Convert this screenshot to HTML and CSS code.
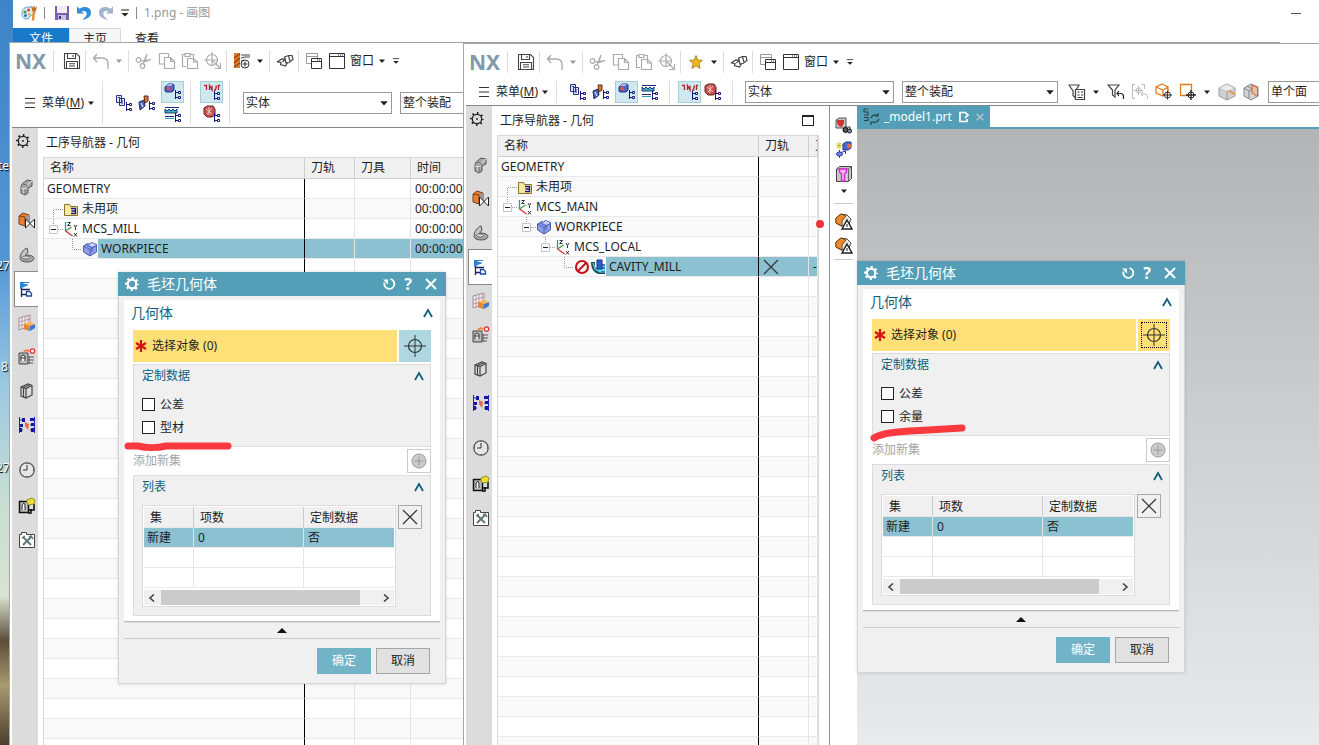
FILE: index.html
```html
<!DOCTYPE html>
<html lang="zh-CN">
<head>
<meta charset="utf-8">
<title>1.png - 画图</title>
<link rel="stylesheet" href="styles.css">
</head>
<body>
<svg class="defs" aria-hidden="true">
  <symbol id="i-palette" viewBox="0 0 18 18"><path d="M2 9c0-4 3-6 7-6s6 2 6 5-2 3-4 3-1 4-4 4-5-2-5-6z" fill="#dcebf5" stroke="#5f9cc4"/><circle cx="5" cy="8" r="1.5" fill="#3c9e4a"/><circle cx="8.500" cy="6" r="1.500" fill="#d8432e"/><circle cx="5.500" cy="11.500" r="1.500" fill="#2f6fc0"/><circle cx="9" cy="10" r="1.200" fill="#e8b52c"/><path d="M13 16.500l1-10" stroke="#e6932f" stroke-width="2.500"/><path d="M11.500 1l1.500 3 1-3 1 3 2-2-1 5h-4z" fill="#c2702c"/></symbol>
  <symbol id="i-psave" viewBox="0 0 16 16"><path d="M1 1h14v14H1z" fill="#7b5fb3"/><path d="M3 1h10v7H3z" fill="#f0edf8"/><path d="M4 10h8v5H4z" fill="#c9bfe0"/><path d="M5 11h2v3H5z" fill="#4b3585"/></symbol>
  <symbol id="i-pundo" viewBox="0 0 16 16"><path d="M1 1.500v7h7L5.700 6.300c3-1 5 .2 5 2.400 0 2.200-1.700 3.800-4.700 6 5.500-.7 9-3 9-7C15 2.500 9 .3 3.500 3.800z" fill="currentColor"/></symbol>
  <symbol id="i-qat" viewBox="0 0 10 10"><path d="M1 2h8" stroke="#222"/><path d="M1.500 5h7L5 8.500z" fill="#222"/></symbol>
  <symbol id="i-caret" viewBox="0 0 8 8"><path d="M1 2.500h6L4 6z" fill="currentColor"/></symbol>
  <symbol id="i-save" viewBox="0 0 18 18"><g fill="none" stroke="#444" stroke-width="1.100"><path d="M1.500 1.500h12l3 3v12h-15z"/><path d="M4.500 1.500v5h8v-5M10 3v2M3.500 16.500v-7h11v7M6 11.700h6M6 14h6"/></g></symbol>
  <symbol id="i-undo" viewBox="0 0 18 18"><path d="M5 2L1.500 6 5 10M2 6h8c4 0 6 2.500 6 5.500V17" fill="none" stroke="#aaa" stroke-width="1.300"/></symbol>
  <symbol id="i-cut" viewBox="0 0 18 18"><g fill="none" stroke="#aaa" stroke-width="1.200"><circle cx="3.500" cy="8" r="2.300"/><circle cx="7.500" cy="14" r="2.300"/><path d="M5.500 9L16 7.500 9 10M8 12L12 2l-2.500 8"/></g></symbol>
  <symbol id="i-copy" viewBox="0 0 18 18"><path d="M6 12H1.500V1.500h9V5M6.500 5.500h6l4 4v7h-10zM12.500 5.500v4h4" fill="none" stroke="#aaa" stroke-width="1.200"/></symbol>
  <symbol id="i-paste" viewBox="0 0 18 18"><path d="M5 14.500H1.500v-12H4M9 2.500h3.500V6M4 1.500h5v3H4zM6.500 6.500h6l4 3.500v6.500h-10zM12.500 6.500V10h4" fill="none" stroke="#aaa" stroke-width="1.200"/></symbol>
  <symbol id="i-target" viewBox="0 0 18 18"><g fill="none" stroke="#aaa" stroke-width="1.200"><circle cx="8" cy="8" r="5.500"/><path d="M8 0v14M0 8h14M9 9l7 7M16.500 11v5.500H11"/></g></symbol>
  <symbol id="i-drill" viewBox="0 0 18 18"><path d="M1 1h6v15H1z" fill="#e07c2c"/><path d="M1 6l6-4M1 11l6-5M1 15l6-4" stroke="#8c4510" stroke-width="1.400"/><path d="M8 3h9M8 6l4-1h5M8 9l3-1" stroke="#444" fill="none"/><circle cx="12" cy="12" r="4" fill="#fff" stroke="#333"/><path d="M12 9.500v5M9.500 12h5" stroke="#333"/></symbol>
  <symbol id="i-star" viewBox="0 0 18 18"><path d="M9 2.500l1.800 4.500 4.700.4-3.600 3 1.200 5L9 12.900l-4.100 2.500 1.200-5-3.600-3 4.700-.4z" fill="#f3b61f" stroke="#9b761d" stroke-width=".8"/></symbol>
  <symbol id="i-hand" viewBox="0 0 18 18"><g fill="none" stroke="#444" stroke-width="1.200"><path d="M1 10l5-3 3 .5L6.500 10M1 10l4 .5-.5 2 5 1.500 2-3.500"/><path d="M8.500 5l4-1.500h3.500l1 4-4 3-3 .5z"/><path d="M12.500 4l1.500 5"/></g></symbol>
  <symbol id="i-wins" viewBox="0 0 18 18"><g fill="#fff" stroke="#999"><path d="M1.500 1.500h11v10h-11zM1.500 4.500h11"/><path d="M6.500 6.500h10v10h-10zM6.500 9.500h10" stroke="#333"/></g><path d="M12 8h3" stroke="#333" stroke-dasharray="1 1"/></symbol>
  <symbol id="i-win" viewBox="0 0 18 18"><path d="M1.500 1.500h15v15h-15zM1.500 4.500h15" fill="none" stroke="#333"/><path d="M10 3h5" stroke="#333" stroke-dasharray="1 1"/></symbol>
  <symbol id="i-menu" viewBox="0 0 12 12"><path d="M1 1.500h10M1 6h10M1 10.500h10" stroke="#333" stroke-width="1.200"/></symbol>
  <symbol id="branch" viewBox="0 0 8 10"><path d="M1.500 0v9M1.500 2.500H5M1.500 7.500H5" stroke="#16167c" fill="none"/><path d="M4.500 1.500h2v2h-2zM4.500 6.500h2v2h-2z" fill="#fff" stroke="#16167c"/></symbol>
  <symbol id="i-nprog" viewBox="0 0 18 18"><g fill="#dfe4f6" stroke="#26308c"><path d="M1.500 1.500h5v7h-5zM4.500 4.500h5v7h-5z"/></g><path d="M3 3.500h2M6 7h2M6 9h2" stroke="#26308c"/><use href="#branch" x="10" y="8" width="8" height="10"/></symbol>
  <symbol id="i-ntool" viewBox="0 0 18 18"><path d="M1 8l5-2 1 6-5 4z" fill="#4c62b4" stroke="#222a66"/><path d="M6 2h4v5l-3 2z" fill="#de7b3a" stroke="#632b14"/><path d="M3 9l2 4" stroke="#fff"/><use href="#branch" x="10" y="7" width="8" height="10"/></symbol>
  <symbol id="i-ngeom" viewBox="0 0 18 18"><path d="M1 4l3-3h5l1 1v5L8 9H2L1 8z" fill="#4f63c8" stroke="#27348c"/><circle cx="4.500" cy="5.500" r="2" fill="#e0503c"/><path d="M4 1h5l-2 2H2z" fill="#a9b5ee"/><use href="#branch" x="10" y="7" width="8" height="10"/></symbol>
  <symbol id="i-nmeth" viewBox="0 0 18 18"><path d="M1 2.500h14M1 11.500h9" stroke="#1b2c80"/><path d="M1 4l2 2 2-2 2 2 2-2 2 2 2-2v4H1z" fill="#49a9c9" stroke="#14406e"/><path d="M1 13.500h9" stroke="#2b9fb5"/><use href="#branch" x="10" y="8" width="8" height="10"/></symbol>
  <symbol id="i-path" viewBox="0 0 18 18"><path d="M1 2.500h2.500V7M6.500 7V2.500L9 7V2.500M11 7h1.500l1-4.500M15.500 7V2.500H17" stroke="#b3232b" stroke-width="1.300" fill="none"/><use href="#branch" x="10" y="8" width="8" height="10"/></symbol>
  <symbol id="i-check" viewBox="0 0 18 18"><path d="M1 3l3-2h6l2 3v6l-3 2H4L1 9z" fill="#c9514f" stroke="#5b2424"/><path d="M3 4l6 5M9 3L4 9M6 2v8" stroke="#eec4c0"/><use href="#branch" x="10" y="8" width="8" height="10"/></symbol>
  <symbol id="i-filter1" viewBox="0 0 18 18"><g fill="none" stroke="#444" stroke-width="1.200"><path d="M1 2h10l-3.500 6v7L5 12.500V8z"/><path d="M7.500 6.500h9v10h-9z" fill="#fff"/></g><path d="M9.500 9h2M9.500 12h2M13 9h2M13 12h2M9.500 14.500h5" stroke="#333"/></symbol>
  <symbol id="i-filter2" viewBox="0 0 18 18"><g fill="none" stroke="#444" stroke-width="1.200"><path d="M1 2h11L8 7v7L5.500 12V7z"/><path d="M12 8l-2 2.500 2 2.500M10.500 10.500h3c2 0 3 1.500 3 3V16" stroke="#222"/></g></symbol>
  <symbol id="i-filter3" viewBox="0 0 18 18"><g fill="none" stroke="#bbb"><path d="M4 1.500H1.500v14H4M11 1.500h2.500V6M7.500 3v9M3 7.500h9M12 9l-2 2 2 2M10 11h4c2 0 2.500 1.500 2.500 5"/><circle cx="7.500" cy="7.500" r="2.500"/></g></symbol>
  <symbol id="i-cubet" viewBox="0 0 18 18"><path d="M7 1l6 3v6l-5 3-7-3V4zM1 4l7 3 5-3M8 7v6" fill="#fff" stroke="#e07c22" stroke-width="1.300"/><circle cx="12.500" cy="12" r="3" fill="#fff" stroke="#333"/><path d="M12.500 7.500v9M8 12h9" stroke="#333"/></symbol>
  <symbol id="i-sqt" viewBox="0 0 18 18"><path d="M1.500 1.500h11v11h-11z" fill="none" stroke="#e07c22" stroke-width="1.300"/><circle cx="12" cy="12" r="3" fill="#fff" stroke="#222"/><path d="M12 7v10M7 12h10" stroke="#222" stroke-width="1.300"/></symbol>
  <symbol id="i-cube1" viewBox="0 0 18 18"><path d="M9 1l8 4v8l-8 4-8-4V5z" fill="#cfd1d4" stroke="#999b9e"/><path d="M1 5l8 4 8-4L9 1z" fill="#ececee" stroke="#aaa" stroke-width=".6"/><path d="M9 9v8" stroke="#999"/><path d="M8 7.500h4l4.500 2.500v2L12 9.500z" fill="#e58f45"/></symbol>
  <symbol id="i-cube2" viewBox="0 0 18 18"><path d="M9 1l7 3v9l-7 4-7-4V5z" fill="#d2d4d7" stroke="#888"/><path d="M2 5l5 3v8M7 8l3-2M5 3l5 3" fill="none" stroke="#888"/><path d="M10 2l5.500 2.500v9L10 10z" fill="#e8c0a8" stroke="#d35f2c"/></symbol>
  <symbol id="i-gear" viewBox="0 0 16 16"><circle cx="8" cy="8" r="4.700" fill="none" stroke="currentColor" stroke-width="1.300"/><circle cx="8" cy="8" r="6" fill="none" stroke="currentColor" stroke-width="1.800" stroke-dasharray="1.600 3.112" stroke-dashoffset=".8"/><circle cx="8" cy="8" r=".9" fill="currentColor"/></symbol>
  <symbol id="i-gearw" viewBox="0 0 16 16"><circle cx="8" cy="8" r="4.300" fill="none" stroke="#fff" stroke-width="2.200"/><circle cx="8" cy="8" r="6" fill="none" stroke="#fff" stroke-width="2" stroke-dasharray="2.200 2.512" stroke-dashoffset="1.100"/></symbol>
  <symbol id="i-part" viewBox="0 0 18 18"><path d="M4 6l5-4 5 1v5l-4 2v5l-3 2-4-2V9z" fill="#a5a7a9" stroke="#555"/><path d="M4 6l5 1 5-4M9 7v3l-3 1-3-1M6 11v5M9 7v3" fill="none" stroke="#e5e5e5"/><path d="M4 6l5 1v3M7 11v5" fill="none" stroke="#666"/></symbol>
  <symbol id="i-cons" viewBox="0 0 18 18"><path d="M1 4l4-3 6 2v8l-4 3-6-2z" fill="#ec7d2d" stroke="#6e4327"/><path d="M7 5l4-2v8l-4 3z" fill="#999"/><path d="M1 4l6 1v9" stroke="#6e4327" fill="none"/><path d="M7.500 7v9l9-9v9z" fill="#fff" stroke="#222"/></symbol>
  <symbol id="i-asm" viewBox="0 0 18 18"><ellipse cx="9" cy="12.500" rx="7" ry="3.500" fill="#a4a6a8" stroke="#555"/><ellipse cx="8" cy="11.500" rx="3.500" ry="1.600" fill="#ddd" stroke="#666"/><path d="M2 11C3 6 6 3 9 2l1 4-3 4" fill="#c0c2c4" stroke="#555"/></symbol>
  <symbol id="i-nav" viewBox="0 0 18 18"><path d="M3.500 8v9M3.500 14.500H8M3.500 9.500H12" stroke="#19225a" fill="none" stroke-width="1.300"/><path d="M2 2l8 3-8 4z" fill="#2c82d8"/><path d="M2 2.500h9M5 5h5" stroke="#2c82d8"/><path d="M8.500 11.500h3l2 2v2.500h-5z" fill="#fff" stroke="#204aa0" stroke-width="1.300"/></symbol>
  <symbol id="i-grid" viewBox="0 0 18 18"><path d="M1 4l11-3v11L1 16z" fill="#f4ecec" stroke="#a38c9c"/><path d="M4 3v12M7 2v12M10 2v11M1 8l11-3M1 12l11-3" stroke="#b08aa0" stroke-width=".8"/><path d="M6 10l5 2 6-2v4l-5 3-6-2z" fill="#3578d4"/><path d="M6 10l6-2 5 2-5 2z" fill="#ffb648"/><path d="M6 10l6 2v5l-6-2z" fill="#e58634"/></symbol>
  <symbol id="i-mach" viewBox="0 0 18 18"><path d="M1 5h9v11H1z" fill="#b9bbbd" stroke="#444"/><path d="M3 13V8l2-1 2 1v5M3 10h4" stroke="#333" fill="#eee"/><path d="M11 9h5M11 12h5M11 15h4M11 8v8" stroke="#555"/><path d="M6 4c1-2 3-2 5-1" stroke="#f27d3c" stroke-width="2" fill="none"/><circle cx="14.500" cy="3" r="2.200" fill="#fff" stroke="#dd332c" stroke-width="1.300"/></symbol>
  <symbol id="i-book" viewBox="0 0 18 18"><g fill="none" stroke="#444" stroke-width="1.200"><path d="M3 5l7-3 4 1.500V13l-6 3-5-2z"/><path d="M3 5l5 1.500L14 3.500M8 6.500V16M5.500 5.500l6-2.500M5.500 6v9"/></g></symbol>
  <symbol id="i-proc" viewBox="0 0 18 18"><path d="M1.500 1v16M1.500 4H5M1.500 9H5M1.500 14H5M16.500 1v16M12 4h4M12 9h4M12 14h4" stroke="#2424b0" fill="none"/><path d="M4 2h3v4H4zM2 8h3v3H2zM1 12h3v4H1zM12 2h4v3h-4zM13 7h3v3h-3zM13 12h3v4h-3z" fill="#1717a0"/><path d="M7 6l4 2-1 6-3-4z" fill="#e46f38"/></symbol>
  <symbol id="i-clock" viewBox="0 0 18 18"><circle cx="9" cy="9" r="7.200" fill="#e6e6e6" stroke="#444" stroke-width="1.100"/><path d="M9 4v5H5M9 2v1M9 15v1M2 9h1M15 9h1" fill="none" stroke="#333"/></symbol>
  <symbol id="i-role" viewBox="0 0 18 18"><path d="M1.500 4.500h9v11h-9z" fill="#bbb" stroke="#111" stroke-width="1.500"/><path d="M4 13V8l2-2 1 2v5" fill="#eee" stroke="#333"/><path d="M11 13h5V7M10 16h3v-4" stroke="#111" stroke-width="1.600" fill="none"/><path d="M9 3l5-2 3 2-1 4-5 1-2-2z" fill="#f0d935" stroke="#8a9420"/></symbol>
  <symbol id="i-toolbox" viewBox="0 0 18 18"><path d="M1.500 3.500h2v-2h5v2h8v13h-15z" fill="#fff" stroke="#444"/><path d="M5 6l8 8M13 6l-8 8" stroke="#617878" stroke-width="2"/><path d="M4 7l3-2M11 6l2-1 2 3" stroke="#617878" stroke-width="1.500" fill="none"/></symbol>
  <symbol id="i-folder" viewBox="0 0 16 16"><path d="M1.500 3.500h5l1 2h7v9h-13z" fill="#f7e7a4" stroke="#8a7327"/><path d="M8 7.500h4.500v5H8M8.500 10h4" stroke="#1b1b8a" stroke-width="1.400" fill="none"/></symbol>
  <symbol id="i-csys" viewBox="0 0 16 16"><path d="M2.500 1v9" stroke="#3b8fa0" stroke-width="1.300"/><path d="M2.500 10l6-4" stroke="#3fa54b" stroke-width="1.500"/><path d="M2.500 10l7 5" stroke="#d9363e" stroke-width="1.500"/><path d="M4.500 1.500h3l-3 3h3M11 4l1.500 2.500L14 4M12.500 6.500V9M11 12l3 3.500M14 12l-3 3.500" stroke="#333" fill="none"/></symbol>
  <symbol id="i-work" viewBox="0 0 16 16"><path d="M1.500 5l4-2.500 2 .5 2-1.500 5 2V11L8 15l-6.500-4z" fill="#8d9ce8" stroke="#4f5cb4"/><path d="M1.500 5L8 8.500l6.500-4M8 8.500V15M4 3.500l6 3.500v4" fill="none" stroke="#4f5cb4"/><path d="M5 3l5 2.500 4-1.500-4-2-3 2z" fill="#cdd4fa"/></symbol>
  <symbol id="i-no" viewBox="0 0 16 16"><circle cx="8" cy="8" r="6" fill="#fff" stroke="#c4161c" stroke-width="2.200"/><path d="M12 4l-8 8" stroke="#c4161c" stroke-width="2.200"/></symbol>
  <symbol id="i-cav" viewBox="0 0 16 16"><path d="M1 3h4v5l4 4h6v3H9C4 14 1 10 1 3z" fill="#1f4a52"/><path d="M3 4l2 6 5 3" stroke="#47c7d6" stroke-width="1.500" fill="none"/><path d="M8 5h7v9h-4l-3-3z" fill="#5ee0f0"/><path d="M7 1h5v9H7z" fill="#2f5fc4" stroke="#1b2f86"/><path d="M12 6h3M12 9h3M11 13h4" stroke="#16208a"/></symbol>
  <symbol id="i-v1" viewBox="0 0 18 18"><path d="M1 3l3-2h7v8l-2 2H1z" fill="#c3c3c6" stroke="#555"/><path d="M2 3h7v3L7 10 4 9 2 6z" fill="#d6302c"/><circle cx="10.500" cy="13" r="2.500" fill="#555" stroke="#111"/><circle cx="14.500" cy="14" r="2" fill="#8898aa" stroke="#111"/><path d="M10 10h5v3" stroke="#222" fill="none"/></symbol>
  <symbol id="i-v2" viewBox="0 0 18 18"><path d="M4 1v7M1 4.500h7M2 2l4 5M6 2L2 7" stroke="#c0c828"/><path d="M8 3l3-2h5v6l-3 2H8z" fill="#4668d0" stroke="#273a8c"/><circle cx="14" cy="5" r="2.200" fill="#ea6b38"/><path d="M4.500 9v8M4.500 12l6-2v3" stroke="#27389a" fill="none"/><ellipse cx="4.500" cy="13" rx="3" ry="2" fill="#738be0" stroke="#27389a"/></symbol>
  <symbol id="i-v3" viewBox="0 0 18 18"><path d="M1.500 4l3-2.500h12v12l-3 3h-12z" fill="#c6c8ca" stroke="#444"/><path d="M1.500 4h12v12.500M13.500 4l3-2.500" fill="none" stroke="#666"/><path d="M4.500 4h7v3L9.500 9v7h-3V9l-2-2z" fill="#f2b8f0" stroke="#dd26d8" stroke-width="1.400"/></symbol>
  <symbol id="i-v4" viewBox="0 0 18 18"><path d="M1 6l5-4 6 1 4 4-3 7H6l-5-3z" fill="#ececec" stroke="#444"/><path d="M1 6l5-4 5 2-4 5v5L1 11z" fill="#ee8b2d" stroke="#754516"/><path d="M12 8l5 9H7z" fill="#fff" stroke="#222" stroke-width="1.500"/><path d="M12 12v3" stroke="#222"/></symbol>
  <symbol id="i-part-tab" viewBox="0 0 18 18"><path d="M6 1H2v3h4v3H2M2 9.500h4v3H2" fill="none" stroke="#27434c" stroke-width="1.100"/><path d="M9 10c1-3 4-4 7-2M16 5v3h-3M17 11c-1 3-4 4-7 3M9 17v-3h3" fill="none" stroke="#27434c" stroke-width="1.200"/></symbol>
  <symbol id="i-edit" viewBox="0 0 12 12"><path d="M8 1.500H2v9h7V8M7 1.500L10 4 7 7" fill="none" stroke="#fff" stroke-width="1.700"/></symbol>
  <symbol id="i-x" viewBox="0 0 18 18"><path d="M2 2l14 14M16 2L2 16" stroke="currentColor" stroke-width="1.200"/></symbol>
  <symbol id="i-close" viewBox="0 0 12 12"><path d="M1 1l10 10M11 1L1 11" stroke="currentColor" stroke-width="2"/></symbol>
  <symbol id="i-reset" viewBox="0 0 14 14"><path d="M8.500 2A5 5 0 1 1 2.500 5.500" fill="none" stroke="#fff" stroke-width="1.800"/><path d="M1 2.500h5v5z" fill="#fff"/></symbol>
  <symbol id="i-up" viewBox="0 0 12 12"><path d="M2 10l4-7 4 7" fill="none" stroke="#0f5f7d" stroke-width="1.800"/></symbol>
  <symbol id="i-ast" viewBox="0 0 12 12"><path d="M6 0v12M1 3l10 6M11 3L1 9" stroke="#d81010" stroke-width="2.200"/></symbol>
  <symbol id="i-cross" viewBox="0 0 22 22"><circle cx="11" cy="11" r="6.500" fill="none" stroke="#333" stroke-width="1.200"/><path d="M11 0v22M0 11h22" stroke="#333"/></symbol>
  <symbol id="i-plus" viewBox="0 0 16 16"><circle cx="8" cy="8" r="7" fill="#ccc" stroke="#999"/><path d="M8 3.500v9M3.500 8h9" stroke="#999"/></symbol>
  <symbol id="i-tri" viewBox="0 0 10 6"><path d="M0 6l5-5 5 5z" fill="#111"/></symbol>
  <symbol id="i-left" viewBox="0 0 8 8"><path d="M6 .5L2 4l4 3.500" fill="none" stroke="#444" stroke-width="1.600"/></symbol>
  <symbol id="i-right" viewBox="0 0 8 8"><path d="M2 .5L6 4 2 7.500" fill="none" stroke="#444" stroke-width="1.600"/></symbol>
  <symbol id="c-first" viewBox="0 0 19 20"><path d="M9.500 20v-9.500H19" fill="none" stroke="#999" stroke-dasharray="1 1"/></symbol>
  <symbol id="c-last" viewBox="0 0 19 20"><path d="M9.500 0v10.500H19" fill="none" stroke="#999" stroke-dasharray="1 1"/></symbol>
  <symbol id="c-node" viewBox="0 0 19 20"><path d="M9.500 0v6M14 10.500h5" fill="none" stroke="#999" stroke-dasharray="1 1"/><path d="M5.500 6.500h8v8h-8z" fill="#fff" stroke="#c4c4c4"/><path d="M7 10.500h5" stroke="#222"/></symbol>
</svg>

<main class="desktop">
  <span class="shortcut s1">te</span><span class="shortcut s2">27</span><span class="shortcut s3">8</span><span class="shortcut s4">27</span>

  <section class="paint">
    <header class="paint-title">
      <svg class="ic18"><use href="#i-palette"/></svg><i class="vbar"></i>
      <svg class="ic16"><use href="#i-psave"/></svg>
      <svg class="ic16 blue"><use href="#i-pundo"/></svg>
      <svg class="ic16 faded flip"><use href="#i-pundo"/></svg>
      <svg class="ic10"><use href="#i-qat"/></svg><i class="vbar"></i>
      <span class="paint-name">1.png - 画图</span>
      <button class="flat minimize" aria-label="最小化"></button>
    </header>
    <nav class="paint-tabs"><button class="ptab file">文件</button><button class="ptab home">主页</button><button class="ptab">查看</button></nav>
  </section>

  <section class="nx nx-back">
    <div class="bar quick">
      <strong class="logo">NX</strong><i class="sep first"></i>
      <button class="tb" aria-label="保存"><svg class="ic18"><use href="#i-save"/></svg></button><i class="sep"></i>
      <button class="tb" aria-label="撤销"><svg class="ic18"><use href="#i-undo"/></svg></button><button class="cb dim" aria-label="撤销列表"><svg class="ic8"><use href="#i-caret"/></svg></button><i class="sep"></i>
      <button class="tb" aria-label="剪切"><svg class="ic18"><use href="#i-cut"/></svg></button><button class="tb" aria-label="复制"><svg class="ic18"><use href="#i-copy"/></svg></button><button class="tb" aria-label="粘贴"><svg class="ic18"><use href="#i-paste"/></svg></button><button class="tb" aria-label="定位"><svg class="ic18"><use href="#i-target"/></svg></button><i class="sep"></i>
      <button class="tb" aria-label="创建刀具"><svg class="ic18"><use href="#i-drill"/></svg></button><button class="cb" aria-label="更多"><svg class="ic8"><use href="#i-caret"/></svg></button><i class="sep"></i>
      <button class="tb" aria-label="触控"><svg class="ic18"><use href="#i-hand"/></svg></button><i class="sep"></i>
      <button class="tb" aria-label="切换窗口"><svg class="ic18"><use href="#i-wins"/></svg></button><button class="tb" aria-label="新窗口"><svg class="ic18"><use href="#i-win"/></svg></button>
      <button class="flat txt">窗口</button><button class="cb" aria-label="窗口列表"><svg class="ic8"><use href="#i-caret"/></svg></button><button class="cb" aria-label="自定义"><svg class="ic8"><use href="#i-qat"/></svg></button>
    </div>
    <div class="bar tools">
      <button class="flat menu"><svg class="ic12"><use href="#i-menu"/></svg>菜单(<u>M</u>)<svg class="ic8"><use href="#i-caret"/></svg></button><i class="sep tall lead"></i>
      <button class="tb" aria-label="程序顺序视图"><svg class="ic18"><use href="#i-nprog"/></svg></button><button class="tb" aria-label="机床视图"><svg class="ic18"><use href="#i-ntool"/></svg></button>
      <div class="stack"><button class="tb on" aria-label="几何视图"><svg class="ic18"><use href="#i-ngeom"/></svg></button><button class="tb" aria-label="加工方法视图"><svg class="ic18"><use href="#i-nmeth"/></svg></button></div><i class="sep tall"></i>
      <div class="stack"><button class="tb on" aria-label="显示刀轨"><svg class="ic18"><use href="#i-path"/></svg></button><button class="tb" aria-label="确认"><svg class="ic18"><use href="#i-check"/></svg></button></div><i class="sep tall"></i>
      <label class="combo wide"><select aria-label="类型"><option>实体</option></select><svg class="ic10"><use href="#i-caret"/></svg></label>
      <label class="combo scope"><select aria-label="范围"><option>整个装配</option></select><svg class="ic10"><use href="#i-caret"/></svg></label>
    </div>
    <div class="work">
      <nav class="side">
        <button class="gear" aria-label="设置"><svg class="ic16"><use href="#i-gear"/></svg></button>
        <button class="top" aria-label="装配导航器"><svg class="ic18"><use href="#i-part"/></svg></button><button aria-label="约束导航器"><svg class="ic18"><use href="#i-cons"/></svg></button><button aria-label="部件导航器"><svg class="ic18"><use href="#i-asm"/></svg></button><button class="sel" aria-label="工序导航器"><svg class="ic18"><use href="#i-nav"/></svg></button><button aria-label="特征导航器"><svg class="ic18"><use href="#i-grid"/></svg></button><button aria-label="机床导航器"><svg class="ic18"><use href="#i-mach"/></svg></button><button aria-label="重用库"><svg class="ic18"><use href="#i-book"/></svg></button><button aria-label="过程"><svg class="ic18"><use href="#i-proc"/></svg></button><button class="later" aria-label="历史记录"><svg class="ic18"><use href="#i-clock"/></svg></button><button class="next" aria-label="角色"><svg class="ic18"><use href="#i-role"/></svg></button><button aria-label="工具箱"><svg class="ic18"><use href="#i-toolbox"/></svg></button>
      </nav>
      <section class="navigator">
        <h2>工序导航器 - 几何</h2>
        <div class="treebox"><table class="tree">
          <colgroup><col class="c-name"><col class="c-path"><col class="c-tool"><col></colgroup>
          <thead><tr><th>名称</th><th>刀轨</th><th>刀具</th><th>时间</th></tr></thead>
          <tbody data-rows="32">
            <tr><td>GEOMETRY</td><td></td><td></td><td>00:00:00</td></tr>
            <tr><td><div class="node"><svg class="con"><use href="#c-first"/></svg><svg class="ic16"><use href="#i-folder"/></svg><span>未用项</span></div></td><td></td><td></td><td>00:00:00</td></tr>
            <tr><td><div class="node"><svg class="con"><use href="#c-node"/></svg><svg class="ic16"><use href="#i-csys"/></svg><span>MCS_MILL</span></div></td><td></td><td></td><td>00:00:00</td></tr>
            <tr class="picked"><td><div class="node l2"><svg class="con"><use href="#c-last"/></svg><svg class="ic16"><use href="#i-work"/></svg><span>WORKPIECE</span></div></td><td></td><td></td><td>00:00:00</td></tr>
          </tbody>
        </table></div>
      </section>
    </div>
  </section>

  <section class="nx nx-front">
    <div class="bar quick">
      <strong class="logo">NX</strong><i class="sep first"></i>
      <button class="tb" aria-label="保存"><svg class="ic18"><use href="#i-save"/></svg></button><i class="sep"></i>
      <button class="tb" aria-label="撤销"><svg class="ic18"><use href="#i-undo"/></svg></button><button class="cb dim" aria-label="撤销列表"><svg class="ic8"><use href="#i-caret"/></svg></button><i class="sep"></i>
      <button class="tb" aria-label="剪切"><svg class="ic18"><use href="#i-cut"/></svg></button><button class="tb" aria-label="复制"><svg class="ic18"><use href="#i-copy"/></svg></button><button class="tb" aria-label="粘贴"><svg class="ic18"><use href="#i-paste"/></svg></button><button class="tb" aria-label="定位"><svg class="ic18"><use href="#i-target"/></svg></button><i class="sep"></i>
      <button class="tb" aria-label="收藏"><svg class="ic18"><use href="#i-star"/></svg></button><button class="cb" aria-label="更多"><svg class="ic8"><use href="#i-caret"/></svg></button><i class="sep"></i>
      <button class="tb" aria-label="触控"><svg class="ic18"><use href="#i-hand"/></svg></button><i class="sep"></i>
      <button class="tb" aria-label="切换窗口"><svg class="ic18"><use href="#i-wins"/></svg></button><button class="tb" aria-label="新窗口"><svg class="ic18"><use href="#i-win"/></svg></button>
      <button class="flat txt">窗口</button><button class="cb" aria-label="窗口列表"><svg class="ic8"><use href="#i-caret"/></svg></button><button class="cb" aria-label="自定义"><svg class="ic8"><use href="#i-qat"/></svg></button>
    </div>
    <div class="bar tools">
      <button class="flat menu"><svg class="ic12"><use href="#i-menu"/></svg>菜单(<u>M</u>)<svg class="ic8"><use href="#i-caret"/></svg></button><i class="sep lead"></i>
      <button class="tb" aria-label="程序顺序视图"><svg class="ic18"><use href="#i-nprog"/></svg></button><button class="tb" aria-label="机床视图"><svg class="ic18"><use href="#i-ntool"/></svg></button><button class="tb on gapped" aria-label="几何视图"><svg class="ic18"><use href="#i-ngeom"/></svg></button><button class="tb" aria-label="加工方法视图"><svg class="ic18"><use href="#i-nmeth"/></svg></button><i class="sep wide"></i>
      <button class="tb on" aria-label="显示刀轨"><svg class="ic18"><use href="#i-path"/></svg></button><button class="tb" aria-label="确认"><svg class="ic18"><use href="#i-check"/></svg></button><i class="sep wide"></i>
      <label class="combo wide"><select aria-label="类型"><option>实体</option></select><svg class="ic10"><use href="#i-caret"/></svg></label>
      <label class="combo scope"><select aria-label="范围"><option>整个装配</option></select><svg class="ic10"><use href="#i-caret"/></svg></label>
      <div class="filters">
        <button class="tb" aria-label="常规选择过滤器"><svg class="ic18"><use href="#i-filter1"/></svg></button><button class="cb" aria-label="过滤器列表"><svg class="ic8"><use href="#i-caret"/></svg></button><button class="tb" aria-label="重置过滤器"><svg class="ic18"><use href="#i-filter2"/></svg></button><button class="tb" aria-label="全不选"><svg class="ic18"><use href="#i-filter3"/></svg></button><button class="tb" aria-label="选择体"><svg class="ic18"><use href="#i-cubet"/></svg></button><button class="tb" aria-label="矩形选择"><svg class="ic18"><use href="#i-sqt"/></svg></button><button class="cb" aria-label="选择列表"><svg class="ic8"><use href="#i-caret"/></svg></button><button class="tb" aria-label="隐藏边"><svg class="ic18"><use href="#i-cube1"/></svg></button><button class="tb" aria-label="内部面"><svg class="ic18"><use href="#i-cube2"/></svg></button>
      </div>
      <label class="combo wide rule"><select aria-label="面规则"><option>单个面</option></select><svg class="ic10"><use href="#i-caret"/></svg></label>
    </div>
    <div class="work">
      <nav class="side">
        <button class="gear" aria-label="设置"><svg class="ic16"><use href="#i-gear"/></svg></button>
        <button class="top" aria-label="装配导航器"><svg class="ic18"><use href="#i-part"/></svg></button><button aria-label="约束导航器"><svg class="ic18"><use href="#i-cons"/></svg></button><button aria-label="部件导航器"><svg class="ic18"><use href="#i-asm"/></svg></button><button class="sel" aria-label="工序导航器"><svg class="ic18"><use href="#i-nav"/></svg></button><button aria-label="特征导航器"><svg class="ic18"><use href="#i-grid"/></svg></button><button aria-label="机床导航器"><svg class="ic18"><use href="#i-mach"/></svg></button><button aria-label="重用库"><svg class="ic18"><use href="#i-book"/></svg></button><button aria-label="过程"><svg class="ic18"><use href="#i-proc"/></svg></button><button class="later" aria-label="历史记录"><svg class="ic18"><use href="#i-clock"/></svg></button><button class="next" aria-label="角色"><svg class="ic18"><use href="#i-role"/></svg></button><button aria-label="工具箱"><svg class="ic18"><use href="#i-toolbox"/></svg></button>
      </nav>
      <section class="navigator docked">
        <h2>工序导航器 - 几何 <button class="flat restore" aria-label="最大化"></button></h2>
        <div class="treebox"><table class="tree">
          <colgroup><col class="c-name"><col class="c-path"><col></colgroup>
          <thead><tr><th>名称</th><th>刀轨</th><th>刀具</th></tr></thead>
          <tbody data-rows="32">
            <tr><td>GEOMETRY</td><td></td><td></td></tr>
            <tr><td><div class="node"><svg class="con"><use href="#c-first"/></svg><svg class="ic16"><use href="#i-folder"/></svg><span>未用项</span></div></td><td></td><td></td></tr>
            <tr><td><div class="node"><svg class="con"><use href="#c-node"/></svg><svg class="ic16"><use href="#i-csys"/></svg><span>MCS_MAIN</span></div></td><td></td><td></td></tr>
            <tr><td><div class="node l2"><svg class="con"><use href="#c-node"/></svg><svg class="ic16"><use href="#i-work"/></svg><span>WORKPIECE</span></div></td><td></td><td></td></tr>
            <tr><td><div class="node l3"><svg class="con"><use href="#c-node"/></svg><svg class="ic16"><use href="#i-csys"/></svg><span>MCS_LOCAL</span></div></td><td></td><td></td></tr>
            <tr class="picked"><td><div class="node l4"><svg class="con"><use href="#c-last"/></svg><svg class="ic16"><use href="#i-no"/></svg><svg class="ic16"><use href="#i-cav"/></svg><span>CAVITY_MILL</span></div></td><td><svg class="ic18 mark"><use href="#i-x"/></svg></td><td>-</td></tr>
          </tbody>
        </table></div>
      </section>
      <div class="vtools">
        <button class="tb" aria-label="创建刀具"><svg class="ic18"><use href="#i-v1"/></svg></button><button class="tb" aria-label="创建几何体"><svg class="ic18"><use href="#i-v2"/></svg></button><button class="tb" aria-label="创建工序"><svg class="ic18"><use href="#i-v3"/></svg></button><svg class="ic8"><use href="#i-caret"/></svg><hr><button class="tb" aria-label="分析"><svg class="ic18"><use href="#i-v4"/></svg></button><button class="tb" aria-label="检查"><svg class="ic18"><use href="#i-v4"/></svg></button><hr class="end">
      </div>
      <section class="viewport">
        <div class="doc-tabs"><div class="doc-tab"><svg class="ic18"><use href="#i-part-tab"/></svg><span>_model1.prt</span><svg class="ic12"><use href="#i-edit"/></svg><button class="flat tabx" aria-label="关闭"><svg class="ic8"><use href="#i-close"/></svg></button></div></div>
        <div class="canvas"></div>
      </section>
    </div>
  </section>

  <form class="dialog d1">
    <header><svg class="ic16"><use href="#i-gearw"/></svg><h3>毛坯几何体</h3><button type="button" class="flat" aria-label="重置"><svg class="ic14"><use href="#i-reset"/></svg></button><button type="button" class="flat help">?</button><button type="button" class="flat dclose" aria-label="关闭"><svg class="ic12"><use href="#i-close"/></svg></button></header>
    <div class="panel">
      <h4>几何体<svg class="ic12"><use href="#i-up"/></svg></h4>
      <div class="pickrow"><div class="pick"><svg class="ic12"><use href="#i-ast"/></svg>选择对象 (0)</div><button type="button" class="aim" aria-label="选择对象"><svg class="ic22"><use href="#i-cross"/></svg></button></div>
      <fieldset class="group"><h5>定制数据<svg class="ic12"><use href="#i-up"/></svg></h5><label class="tick"><input type="checkbox">公差</label><label class="tick"><input type="checkbox">型材</label></fieldset>
      <div class="addrow">添加新集<button type="button" class="sq add" aria-label="添加新集"><svg class="ic16"><use href="#i-plus"/></svg></button></div>
      <fieldset class="group list"><h5>列表<svg class="ic12"><use href="#i-up"/></svg></h5>
        <div class="listrow"><div class="grid"><table><colgroup><col class="g1"><col class="g2"><col></colgroup><thead><tr><th>集</th><th>项数</th><th>定制数据</th></tr></thead><tbody><tr class="on"><td>新建</td><td>0</td><td>否</td></tr><tr><td></td><td></td><td></td></tr><tr><td></td><td></td><td></td></tr></tbody></table>
          <div class="scroll"><svg class="ic8"><use href="#i-left"/></svg><span class="track"><i></i></span><svg class="ic8"><use href="#i-right"/></svg></div></div><button type="button" class="sq" aria-label="移除"><svg class="ic18"><use href="#i-x"/></svg></button></div>
      </fieldset>
    </div>
    <div class="fold"><svg class="tri"><use href="#i-tri"/></svg></div>
    <footer><button type="button" class="act ok">确定</button><button type="button" class="act">取消</button></footer>
  </form>

  <form class="dialog d2">
    <header><svg class="ic16"><use href="#i-gearw"/></svg><h3>毛坯几何体</h3><button type="button" class="flat" aria-label="重置"><svg class="ic14"><use href="#i-reset"/></svg></button><button type="button" class="flat help">?</button><button type="button" class="flat dclose" aria-label="关闭"><svg class="ic12"><use href="#i-close"/></svg></button></header>
    <div class="panel">
      <h4>几何体<svg class="ic12"><use href="#i-up"/></svg></h4>
      <div class="pickrow"><div class="pick"><svg class="ic12"><use href="#i-ast"/></svg>选择对象 (0)</div><button type="button" class="aim active" aria-label="选择对象"><svg class="ic22"><use href="#i-cross"/></svg></button></div>
      <fieldset class="group"><h5>定制数据<svg class="ic12"><use href="#i-up"/></svg></h5><label class="tick"><input type="checkbox">公差</label><label class="tick"><input type="checkbox">余量</label></fieldset>
      <div class="addrow">添加新集<button type="button" class="sq add" aria-label="添加新集"><svg class="ic16"><use href="#i-plus"/></svg></button></div>
      <fieldset class="group list"><h5>列表<svg class="ic12"><use href="#i-up"/></svg></h5>
        <div class="listrow"><div class="grid"><table><colgroup><col class="g1"><col class="g2"><col></colgroup><thead><tr><th>集</th><th>项数</th><th>定制数据</th></tr></thead><tbody><tr class="on"><td>新建</td><td>0</td><td>否</td></tr><tr><td></td><td></td><td></td></tr><tr><td></td><td></td><td></td></tr></tbody></table>
          <div class="scroll"><svg class="ic8"><use href="#i-left"/></svg><span class="track"><i></i></span><svg class="ic8"><use href="#i-right"/></svg></div></div><button type="button" class="sq" aria-label="移除"><svg class="ic18"><use href="#i-x"/></svg></button></div>
      </fieldset>
    </div>
    <div class="fold"><svg class="tri"><use href="#i-tri"/></svg></div>
    <footer><button type="button" class="act ok">确定</button><button type="button" class="act">取消</button></footer>
  </form>

  <svg class="ink ink1" viewBox="0 0 110 12"><path d="M4 6h10c8 2 20 2 28 0h62" fill="none" stroke="#fb3a40" stroke-width="7" stroke-linecap="round" stroke-linejoin="round"/></svg>
  <svg class="ink ink2" viewBox="0 0 100 20"><path d="M5 15c8-5 22-6 36-7l18-1 34-2" fill="none" stroke="#fb3a40" stroke-width="7" stroke-linecap="round" stroke-linejoin="round"/></svg>
  <i class="dot"></i>
</main>
<script src="rows.js"></script>
</body>
</html>
```

FILE: rows.js
```js
// Fill each navigator table with blank rows up to its row count.
document.querySelectorAll("tbody[data-rows]").forEach(function (body) {
  var total = Number(body.dataset.rows);
  var cells = body.rows[0].cells.length;
  while (body.rows.length < total) {
    var row = body.insertRow();
    for (var i = 0; i < cells; i++) row.insertCell();
  }
});
```

FILE: styles.css
```css
* { box-sizing: border-box; }
body {
  margin: 0;
  font: 12px/16px "Noto Sans", "Noto Sans CJK SC", sans-serif;
  color: #1e1e1e;
}
h2, h3, h4, h5 { margin: 0; font-weight: 400; }
button, select, input { font: inherit; color: inherit; margin: 0; }
svg { flex: none; display: block; }
i { font-style: normal; }
.defs { position: absolute; width: 0; height: 0; }
.ic8 { width: 8px; height: 8px; }
.ic10 { width: 10px; height: 10px; }
.ic12 { width: 12px; height: 12px; }
.ic14 { width: 14px; height: 14px; }
.ic16 { width: 16px; height: 16px; }
.ic18 { width: 18px; height: 18px; }
.ic22 { width: 22px; height: 22px; }
.flat { border: 0; background: none; padding: 0; display: flex; align-items: center; }

.desktop {
  position: relative;
  height: 100vh;
  overflow: hidden;
  background: linear-gradient(#3f83c8 0, #5296d6 35%, #9cc9e2 52%, #c9dfd2 68%, #d8e3d0 80%, #5b4d38 86%, #a99a70 92%, #4b3e2c);
}
.shortcut { position: absolute; left: -2px; color: #fff; text-shadow: 1px 1px 1px #000; }
.s1 { top: 158px; }
.s2 { top: 258px; left: -4px; }
.s3 { top: 359px; left: 1px; }
.s4 { top: 460px; left: -4px; }

/* Paint window */
.paint { position: absolute; left: 13px; right: 0; top: 0; height: 60px; background: #fff; }
.paint-title { display: flex; align-items: center; gap: 6px; height: 28px; padding: 0 18px 2px 7px; }
.vbar { width: 1px; height: 12px; margin-right: 3px; background: #888; }
.vbar + .paint-name { margin-left: -2px; }
.blue { color: #2f8fdc; }
.faded { color: #a3b3cc; }
.flip { transform: scaleX(-1); }
.paint-name { color: #999; }
.minimize { margin-left: auto; width: 10px; height: 1px; background: #555; }
.paint-tabs { display: flex; height: 32px; }
.ptab { border: 0; background: none; width: 52px; padding: 3px 0 0; line-height: 16px; display: flex; justify-content: center; }
.ptab.file { width: 56px; background: #1979ca; color: #fff; }
.ptab.home { background: #f5f6f7; border: 1px solid #dadbdc; padding-top: 2px; }

/* NX windows */
.nx { position: absolute; bottom: 0; background: #fff; display: flex; flex-direction: column; padding-left: 2px; border: 1px solid #a5a5a8; border-bottom: 0; }
.nx-back { left: 9px; right: 39px; top: 42px; }
.nx-front { left: 463px; right: 0; top: 43px; border-right: 0; }
.bar { display: flex; align-items: center; flex: none; }
.quick { height: 36px; padding-left: 3px; }
.nx-front .quick { height: 35px; }
.logo { width: 34px; font-size: 21px; line-height: 24px; color: #8299ab; margin-right: 2px; }
.sep { width: 1px; height: 22px; background: #dedede; margin: 0 3px 0 2px; flex: none; }
.sep.first { margin-right: 6px; }
.tb, .cb { border: 1px solid transparent; background: none; padding: 0; width: 23px; height: 22px; display: flex; align-items: center; justify-content: center; flex: none; }
.cb { width: 14px; }
.cb.dim { color: #999; }
.tb.on { background: #cfe8ef; border-color: #a9cfd9; }
.txt { margin: 0 1px 0 2px; }
.tools { height: 48px; border-bottom: 1px solid #7f8a8e; padding-left: 12px; }
.nx-back .tools { height: 49px; }
.nx-front .tools { height: 27px; }
.menu { gap: 0; width: 71px; flex: none; white-space: pre; }
.menu .ic12 { margin-right: 6px; }
.menu .ic8 { margin-left: auto; }
.sep.tall { height: 44px; margin: 0 9px 0 6px; }
.sep.lead { margin: 0 9px 0 7px; }
.sep.wide { margin: 0 8px; }
.tb.gapped { margin-left: 3px; }
.stack { display: flex; flex-direction: column; width: 23px; margin-left: 3px; }
.stack + .sep + .stack { margin-left: 0; }
.combo { position: relative; display: block; flex: none; height: 22px; margin-left: 4px; }
.combo.wide { width: 149px; }
.combo.scope { width: 156px; margin-left: 8px; }
.combo.rule { margin-left: 2px; }
.combo select { appearance: none; width: 100%; height: 100%; border: 1px solid #999; border-radius: 0; background: #fff; padding: 0 2px; line-height: 16px; }
.combo svg { position: absolute; right: 3px; top: 6px; pointer-events: none; }
.filters { display: flex; align-items: center; margin: 0 4px 0 7px; gap: 1px; }

.work { flex: 1; display: flex; min-height: 0; }
.side { width: 26px; background: #dcdcdc; display: flex; flex-direction: column; flex: none; }
.side button { border: 0; background: none; padding: 0 0 0 4px; height: 34px; display: flex; align-items: center; justify-content: center; flex: none; }
.side .gear { height: 26px; padding: 0 5px 0 0; }
.side .top { margin-top: 16px; }
.side .sel { height: 36px; margin: -1px 0 -1px 2px; padding: 0; background: #fff; border: 1px solid #8a8a8a; border-right: 0; }
.side .later { margin-top: 11px; }
.side .next { margin-top: 2px; }
.navigator { flex: 1; min-width: 0; display: flex; flex-direction: column; overflow: hidden; padding-left: 5px; }
.navigator h2 { font-size: 12px; line-height: 29px; height: 29px; padding-left: 3px; display: flex; justify-content: space-between; align-items: center; flex: none; }
.docked { flex: none; width: 338px; padding-right: 10px; border-right: 1px solid #8a8f92; }
.restore { width: 12px; height: 11px; border: 1px solid #222; border-top-width: 2px; margin-right: 5px; }
.treebox { flex: 1; min-height: 0; overflow: hidden; border: 1px solid #d8d8d8; border-bottom: 0; }
.tree { width: 100%; table-layout: fixed; border-collapse: separate; border-spacing: 0; }
.c-name { width: 261px; }
.c-path { width: 50px; }
.c-tool { width: 56px; }
.tree th, .tree td { height: 20px; padding: 0 0 0 4px; text-align: left; font-weight: 400; line-height: 18px; border-right: 1px solid #e4e4e4; border-bottom: 1px solid #e8e8e8; overflow: hidden; white-space: nowrap; }
.tree th { height: 21px; background: #f0f0f0; padding-left: 6px; border-color: #cfcfcf; }
.tree tbody tr:nth-child(even) { background: #f9f9f9; }
.tree td:first-child { border-right-color: #000; padding-left: 3px; }
.node { display: flex; align-items: center; height: 19px; margin-left: -3px; }
.node span { flex: 1; padding-left: 3px; line-height: 19px; }
.con { width: 19px; height: 20px; }
.node.l2 { padding-left: 19px; }
.node.l3 { padding-left: 38px; }
.node.l4 { padding-left: 57px; }
.picked span, .picked td + td { background: #8bc1d0; }
.mark { color: #333; margin: 0 0 0 -1px; }

.vtools { width: 27px; flex: none; display: flex; flex-direction: column; align-items: center; padding: 9px 0 0; gap: 2px; }
.vtools hr { width: 19px; border: 0; border-top: 1px solid #ccc; margin: 6px 0 4px; }
.vtools .end { margin: 1px 0 0; }
.viewport { flex: 1; display: flex; flex-direction: column; min-width: 0; }
.doc-tabs { height: 23px; border-bottom: 2px solid #549fb7; flex: none; }
.doc-tab { width: 133px; height: 21px; background: #549fb7; color: #fff; display: flex; align-items: center; padding-left: 5px; gap: 4px; }
.doc-tab span { flex: 1; }
.tabx { color: #b7c9cf; margin: 0 6px 0 2px; }
.canvas { flex: 1; background: linear-gradient(#b3b4b6, #e9eaec); }

/* Dialogs */
.dialog { position: absolute; width: 328px; background: #f0f0f0; border: 1px solid #d5d5d5; border-top: 0; box-shadow: 0 0 3px rgba(0, 0, 0, .15); }
.d1 { left: 118px; top: 272px; }
.d2 { left: 857px; top: 261px; }
.dialog header { height: 24px; margin: 0 -1px; background: #549fb7; color: #fff; display: flex; align-items: center; padding: 0 9px 0 6px; }
.dialog h3 { font-size: 14px; line-height: 20px; flex: 1; padding-left: 7px; }
.help { width: 24px; justify-content: center; font-size: 16px; font-weight: 700; }
.dclose { margin-left: 5px; }
.panel { margin: 4px 5px 0; padding: 0 9px 5px; background: #fff; border-bottom: 1px solid #bbb; box-shadow: 0 1px 0 #ddd; }
.panel h4 { height: 30px; margin: 0 -9px 0 -2px; padding: 0 6px 5px 0; font-size: 14px; color: #0f5f7d; display: flex; align-items: center; justify-content: space-between; }
.pickrow { display: flex; gap: 2px; height: 32px; }
.pick { flex: 1; background: #ffe077; display: flex; align-items: center; gap: 5px; padding-left: 2px; }
.aim { width: 32px; border: 0; padding: 0; background: #afd7e2; display: flex; align-items: center; justify-content: center; }
.aim.active { background: #ffe077; outline: 1px dotted #000; outline-offset: -4px; }
.group { min-width: 0; margin: 2px 0 0; padding: 0 8px; border: 1px solid #dcdcdc; background: #f0f0f0; height: 83px; }
.group h5 { font-size: 12px; line-height: 22px; color: #0f5f7d; display: flex; align-items: center; justify-content: space-between; margin-right: -3px; }
.tick { display: flex; align-items: center; gap: 5px; height: 23px; }
h5 + .tick { margin-top: 6px; }
.tick input { appearance: none; width: 13px; height: 13px; border: 1px solid #222; background: #fff; }
.addrow { display: flex; align-items: center; justify-content: space-between; height: 24px; margin-top: 2px; color: #a5a5a5; }
.sq { width: 24px; height: 24px; border: 1px solid #aaa; background: #f0f0f0; padding: 0; display: flex; align-items: center; justify-content: center; flex: none; color: #333; }
.sq.add { background: #fff; border-color: #ccc; }
.group.list { height: auto; padding-bottom: 8px; }
.listrow { display: flex; gap: 2px; align-items: flex-start; margin-top: 7px; }
.grid { flex: 1; min-width: 0; background: #fff; border: 1px solid #dcdcdc; padding: 1px; }
.grid table { width: 100%; table-layout: fixed; border-collapse: separate; border-spacing: 0; }
.g1 { width: 50px; }
.g2 { width: 110px; }
.grid th, .grid td { height: 20px; padding: 0 0 0 4px; line-height: 19px; text-align: left; font-weight: 400; border-right: 1px solid #e4e4e4; border-bottom: 1px solid #e8e8e8; }
.grid th { height: 21px; background: #f0f0f0; padding-left: 6px; border-right-color: #ccc; }
.grid td:first-child { padding-left: 3px; }
.grid th:last-child, .grid td:last-child { border-right: 0; }
.grid .on { background: #8bc1d0; }
.scroll { display: flex; align-items: center; gap: 5px; height: 15px; margin-top: 2px; padding: 0 4px; background: #f0f0f0; }
.track { flex: 1; height: 15px; }
.track i { display: block; width: 92%; height: 100%; background: #cbcbcb; }
.fold { height: 17px; margin: 0 5px; border-bottom: 1px solid #ccc; display: flex; align-items: center; justify-content: center; }
.tri { width: 10px; height: 6px; }
.dialog footer { display: flex; justify-content: flex-end; gap: 5px; padding: 9px 15px 9px; }
.act { width: 54px; height: 26px; border: 1px solid #a5a5a5; background: #e1e1e1; padding: 0; }
.act.ok { background: #72b3c8; border-color: #72b3c8; color: #fff; }

/* Pen marks over the windows */
.ink { position: absolute; pointer-events: none; }
.ink1 { left: 124px; top: 440px; width: 110px; height: 12px; }
.ink2 { left: 869px; top: 423px; width: 100px; height: 20px; }
.dot { position: absolute; left: 816px; top: 220px; width: 8px; height: 8px; border-radius: 50%; background: #ee3338; }
```
